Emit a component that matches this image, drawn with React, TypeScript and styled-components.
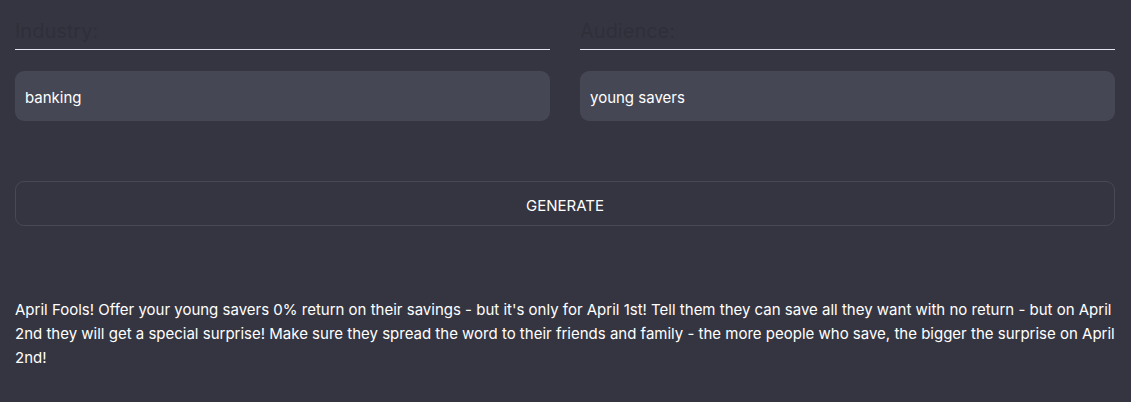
import styled, {createGlobalStyle} from "styled-components";

const GlobalStyle = createGlobalStyle`
  body {
    margin: 0;
    background: #353541;
    font-family: Inter, "Noto Sans", sans-serif;
  }
`

const Page = styled.div`
  padding: 14px 16px 0 15px;
  color: #ffffff;
`
const Fields = styled.div`
  display: grid;
  grid-template-columns: 1fr 1fr;
  column-gap: 30px;
`
const Field = styled.div`
  display: flex;
  flex-direction: column;
`
const Label = styled.label`
  font-size: 20px;
  line-height: 35px;
  color: #2f2f3a;
  border-bottom: 1px solid #e4e3ee;
  margin-bottom: 21px;
`
const Input = styled.input`
  height: 50px;
  box-sizing: border-box;
  border: none;
  border-radius: 9px;
  background: #464754;
  color: #ffffff;
  font-family: Inter, "Noto Sans", sans-serif;
  font-size: 15px;
  padding: 2px 10px 0;
  outline: none;
`
const GenerateButton = styled.button`
  margin-top: 60px;
  width: 100%;
  height: 45px;
  padding: 4px 0 0;
  border: 1px solid #484856;
  border-radius: 9px;
  background: transparent;
  color: #ffffff;
  font-family: Inter, "Noto Sans", sans-serif;
  font-size: 15px;
`
const Result = styled.p`
  margin: 72px 0 0;
  font-size: 15px;
  line-height: 24px;
  color: #ffffff;
`

export default function App() {
    return <>
        <GlobalStyle/>
        <Page>
            <Fields>
                <Field>
                    <Label>Industry:</Label>
                    <Input defaultValue="banking"/>
                </Field>
                <Field>
                    <Label>Audience:</Label>
                    <Input defaultValue="young savers"/>
                </Field>
            </Fields>
            <GenerateButton>GENERATE</GenerateButton>
            <Result>
                April Fools! Offer your young savers 0% return on their savings - but it's only for April 1st! Tell them they can save all they want with no return - but on April 2nd they will get a special surprise! Make sure they spread the word to their friends and family - the more people who save, the bigger the surprise on April 2nd!
            </Result>
        </Page>
    </>
}
